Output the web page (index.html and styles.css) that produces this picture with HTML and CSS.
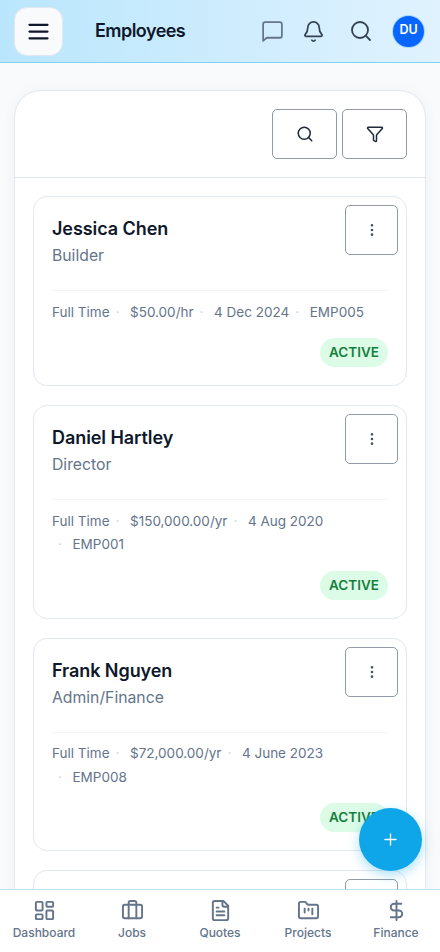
FILE: index.html
```html
<!DOCTYPE html>
<html lang="en">
<head>
<meta charset="utf-8">
<meta name="viewport" content="width=device-width, initial-scale=1">
<title>Employees</title>
<link rel="stylesheet" href="styles.css">
</head>
<body>
<svg class="defs" width="0" height="0" aria-hidden="true">
  <symbol id="dots" viewBox="0 0 24 24"><circle cx="12" cy="5" r="1"/><circle cx="12" cy="12" r="1"/><circle cx="12" cy="19" r="1"/></symbol>
  <symbol id="search" viewBox="0 0 24 24"><circle cx="11" cy="11" r="8"/><path d="m21 21-4.3-4.3"/></symbol>
</svg>
<div class="app">
  <header class="topbar">
    <button class="menu" aria-label="Menu"><svg class="icon" viewBox="0 0 24 24"><path d="M4 6h16M4 12h16M4 18h16"/></svg></button>
    <h1>Employees</h1>
    <div class="tools">
      <svg class="icon chat" viewBox="0 0 24 24"><path d="M21 16a2 2 0 0 1-2 2H6.500L3 21V5a2 2 0 0 1 2-2h14a2 2 0 0 1 2 2z"/></svg>
      <svg class="icon bell" viewBox="0 0 24 24"><path d="M10.270 21a2 2 0 0 0 3.460 0M3.260 15.330A1 1 0 0 0 4 17h16a1 1 0 0 0 .740-1.670C19.410 13.960 18 12.500 18 8A6 6 0 0 0 6 8c0 4.500-1.410 5.960-2.740 7.330"/></svg>
      <svg class="icon find"><use href="#search"/></svg>
      <span class="avatar">DU</span>
    </div>
  </header>
  <main>
    <section class="panel">
      <div class="actions">
        <button class="btn" aria-label="Search"><svg class="icon"><use href="#search"/></svg></button>
        <button class="btn" aria-label="Filter"><svg class="icon filter" viewBox="0 0 24 24"><path d="M10 20a1 1 0 0 0 .550.900l2 1A1 1 0 0 0 14 21v-7a2 2 0 0 1 .520-1.340L21.740 4.670A1 1 0 0 0 21 3H3a1 1 0 0 0-.740 1.670l7.220 7.990A2 2 0 0 1 10 14z"/></svg></button>
      </div>
      <div class="list">
        <article class="card">
          <button class="more" aria-label="More"><svg class="icon"><use href="#dots"/></svg></button>
          <h2>Jessica Chen</h2><p class="role">Builder</p>
          <div class="meta"><span>Full Time</span><span>$50.00/hr</span><span>4 Dec 2024</span><span>EMP005</span></div>
          <span class="badge">ACTIVE</span>
        </article>
        <article class="card">
          <button class="more" aria-label="More"><svg class="icon"><use href="#dots"/></svg></button>
          <h2>Daniel Hartley</h2><p class="role">Director</p>
          <div class="meta"><span>Full Time</span><span>$150,000.00/yr</span><span>4 Aug 2020</span><span>EMP001</span></div>
          <span class="badge">ACTIVE</span>
        </article>
        <article class="card">
          <button class="more" aria-label="More"><svg class="icon"><use href="#dots"/></svg></button>
          <h2>Frank Nguyen</h2><p class="role">Admin/Finance</p>
          <div class="meta"><span>Full Time</span><span>$72,000.00/yr</span><span>4 June 2023</span><span>EMP008</span></div>
          <span class="badge">ACTIVE</span>
        </article>
        <article class="card partial">
          <button class="more" aria-label="More"><svg class="icon"><use href="#dots"/></svg></button>
        </article>
      </div>
    </section>
  </main>
  <button class="fab" aria-label="Add"><svg class="icon" viewBox="0 0 24 24"><path d="M5 12h14M12 5v14"/></svg></button>
  <nav>
    <a><svg class="icon" viewBox="0 0 24 24"><rect x="3" y="3" width="7" height="9" rx="1"/><rect x="14" y="3" width="7" height="5" rx="1"/><rect x="14" y="12" width="7" height="9" rx="1"/><rect x="3" y="16" width="7" height="5" rx="1"/></svg>Dashboard</a>
    <a><svg class="icon" viewBox="0 0 24 24"><path d="M16 20V4a2 2 0 0 0-2-2h-4a2 2 0 0 0-2 2v16"/><rect x="2" y="6" width="20" height="14" rx="2"/></svg>Jobs</a>
    <a><svg class="icon" viewBox="0 0 24 24"><path d="M15 2H6a2 2 0 0 0-2 2v16a2 2 0 0 0 2 2h12a2 2 0 0 0 2-2V7zM14 2v4a2 2 0 0 0 2 2h4M10 9H8M16 13H8M16 17H8"/></svg>Quotes</a>
    <a><svg class="icon" viewBox="0 0 24 24"><path d="M4 20h16a2 2 0 0 0 2-2V8a2 2 0 0 0-2-2h-7.930a2 2 0 0 1-1.660-.900l-.820-1.200A2 2 0 0 0 7.930 3H4a2 2 0 0 0-2 2v13c0 1.100.900 2 2 2zM8 10v4M12 10v2M16 10v6"/></svg>Projects</a>
    <a><svg class="icon" viewBox="0 0 24 24"><path d="M12 2v20M17 5H9.500a3.500 3.500 0 0 0 0 7h5a3.500 3.500 0 0 1 0 7H6"/></svg>Finance</a>
  </nav>
</div>
</body>
</html>
```
FILE: styles.css
```css
*, *::before { box-sizing: border-box; }
body { margin: 0; font-family: Inter, "Liberation Sans", sans-serif; color: #0f172a; }
h1, h2, p { margin: 0; }
button { padding: 0; font: inherit; color: inherit; }
.defs { position: absolute; }
.icon { display: block; fill: none; stroke: currentColor; stroke-width: 2; stroke-linecap: round; stroke-linejoin: round; flex: none; }

.app { height: 952px; display: flex; flex-direction: column; overflow: hidden; position: relative; background: #f8fafc; }

.topbar { height: 63px; flex: none; display: flex; align-items: center; padding: 0 16px 0 14px; background: linear-gradient(90deg, #bae6fd, #e0f2fe); border-bottom: 1px solid #7dd3fc; }
.menu { width: 49px; height: 49px; display: grid; place-items: center; border: 1px solid #e2e8f0; border-radius: 13px; background: #f8fafc; }
.menu .icon { width: 27px; height: 27px; }
.topbar h1 { margin-left: 32px; font-size: 18px; line-height: 28px; font-weight: 600; letter-spacing: -0.55px; }
.tools { margin-left: auto; display: flex; align-items: center; color: #334155; }
.chat { width: 25px; height: 25px; margin-right: 17px; color: #64748b; stroke-width: 1.700; }
.bell { width: 23px; height: 23px; margin-right: 24px; stroke-width: 1.800; }
.find { width: 24px; height: 24px; margin-right: 20px; stroke-width: 1.800; }
.avatar { width: 31px; height: 31px; border-radius: 50%; background: #0866ff; color: #fff; box-shadow: 0 0 0 1px #a5d8fc; text-align: center; font-size: 12.500px; line-height: 28px; font-weight: 600; }

main { flex: 1; min-height: 0; overflow: hidden; padding: 27px 14px 0; }
.panel { height: 900px; border: 1px solid #e2e8f0; border-radius: 27px 27px 0 0; background: #fff; box-shadow: 0 0 14px rgba(15, 23, 42, .04); }
.actions { height: 87px; display: flex; justify-content: flex-end; align-items: center; gap: 5px; padding-right: 18px; border-bottom: 1px solid #e2e8f0; }
.btn { width: 65px; height: 50px; display: grid; place-items: center; border: 1px solid #9299a7; border-radius: 5px; background: #fff; color: #1e293b; }
.btn .icon { width: 18px; height: 18px; }
.list { display: flex; flex-direction: column; gap: 19px; padding: 18px; }
.card { position: relative; flex: none; display: flex; flex-direction: column; border: 1px solid #e2e8f0; border-radius: 14px; padding: 18px; }
.more { position: absolute; top: 8px; right: 8px; width: 53px; height: 50px; display: grid; place-items: center; border: 1px solid #9299a7; border-radius: 5px; background: #fff; color: #475569; }
.more .icon { width: 16px; height: 16px; }
.card h2 { font-size: 18px; line-height: 27px; font-weight: 600; letter-spacing: -0.07px; }
.role { margin-top: 2px; font-size: 15.750px; line-height: 24px; color: #64748b; }
.meta { margin-top: 22px; border-top: 1px solid #f1f5f9; padding-top: 9.500px; display: flex; flex-wrap: wrap; font-size: 13.500px; line-height: 23.500px; color: #64748b; }
.meta span { white-space: nowrap; }
.meta span + span::before { content: "·"; display: inline-block; width: 20.500px; padding-left: 6px; color: #cbd5e1; }
.badge { align-self: flex-end; margin-top: 14px; width: 68px; height: 29px; border-radius: 15px; background: #dcfce7; color: #15803d; text-align: center; font-size: 13.500px; line-height: 29px; font-weight: 600; }
.partial { height: 190px; }

.fab { position: absolute; right: 18px; bottom: 81px; width: 63px; height: 63px; display: grid; place-items: center; border: 0; border-radius: 50%; background: #0ea5e9; color: #fff; box-shadow: 0 4px 12px rgba(14, 165, 233, .35); }
.fab .icon { width: 19px; height: 19px; margin: 0 1px 1px 0; stroke-width: 1.700; }
nav { height: 63px; flex: none; display: grid; grid-template-columns: repeat(5, 1fr); border-top: 1px solid #bae0f0; background: #fff; }
nav a { display: flex; flex-direction: column; align-items: center; padding-top: 9px; gap: 2px; color: #64748b; font-size: 12px; line-height: 18px; font-weight: 500; }
nav .icon { width: 23px; height: 23px; }
```
